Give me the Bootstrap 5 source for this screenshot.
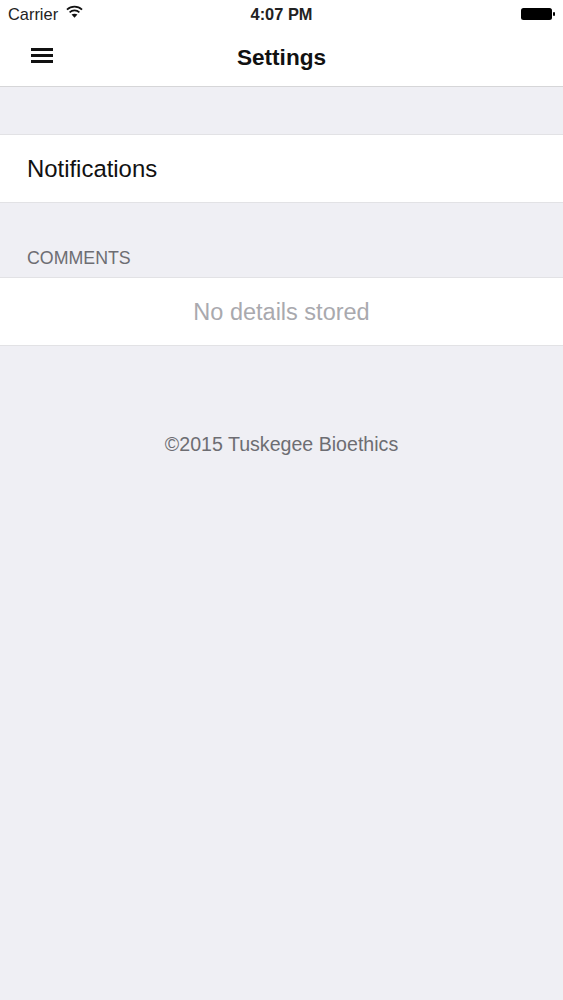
<!DOCTYPE html>
<html lang="en">
<head>
<meta charset="utf-8">
<title>Settings</title>
<link href="https://cdn.jsdelivr.net/npm/bootstrap@5.3.0/dist/css/bootstrap.min.css" rel="stylesheet">
<style>
html, body { height: 100%; }
body { background: #efeff4; font-family: "Liberation Sans", Arial, sans-serif; color: #111; }
.phone-head { background: #fff; height: 87px; border-bottom: 1px solid #d6d6d8; }
.status-row { height: 29px; padding: 0 8px; font-size: 16.4px; color: #222; }
.status-side { flex: 1 1 0; }
.status-time { font-weight: 700; font-size: 16.4px; }
.wifi-ico { width: 17px; height: 13px; margin-left: 8px; margin-top: -5px; }
.batt-ico { width: 34px; height: 14px; margin-top: -1px; }
.title-row { height: 57px; }
.menu-btn { width: 22px; height: 15px; left: 31px; top: 19px; }
.menu-btn i { display: block; height: 3px; background: #111; }
.page-title { font-size: 22.6px; font-weight: 700; margin: 0; line-height: 57px; }
.gap-one { height: 47px; }
.gap-two { height: 40px; }
.set-row { background: #fff; border-top: 1px solid #e2e2e5; border-bottom: 1px solid #e2e2e5; }
.row-notify { height: 69px; padding-left: 27px; padding-top: 1px; font-size: 23.9px; color: #111; }
.sec-label { height: 34px; padding-left: 27px; font-size: 17.8px; color: #6d6d72; line-height: 30px; }
.row-empty { height: 69px; padding-top: 2px; font-size: 23.5px; color: #a9a9ae; }
.foot-note { margin-top: 84px; font-size: 19.6px; color: #6d6d72; line-height: 28px; }
</style>
</head>
<body>
<header class="phone-head">
  <div class="status-row d-flex align-items-center">
    <div class="status-side d-flex align-items-center">
      <span>Carrier</span>
      <svg class="wifi-ico" viewBox="0 0 18 13" aria-hidden="true">
        <path d="M1 4.6C5.6.3 12.4.3 17 4.6" fill="none" stroke="#111" stroke-width="1.8"/>
        <path d="M3.8 7.4c3-2.7 7.4-2.7 10.4 0" fill="none" stroke="#111" stroke-width="1.8"/>
        <path d="M9 13l-3.1-3.2c1.8-1.4 4.4-1.4 6.2 0z" fill="#111"/>
      </svg>
    </div>
    <span class="status-time">4:07 PM</span>
    <div class="status-side d-flex justify-content-end">
      <svg class="batt-ico" viewBox="0 0 34 14" aria-hidden="true">
        <rect x="0" y="1" width="31" height="12" rx="2.5" fill="#000"/>
        <rect x="32" y="5" width="2" height="4" rx="1" fill="#000"/>
      </svg>
    </div>
  </div>
  <nav class="title-row position-relative text-center">
    <div class="menu-btn position-absolute d-flex flex-column justify-content-between" aria-label="Menu"><i></i><i></i><i></i></div>
    <h1 class="page-title">Settings</h1>
  </nav>
</header>
<main>
  <div class="gap-one"></div>
  <div class="set-row row-notify d-flex align-items-center">Notifications</div>
  <div class="gap-two"></div>
  <div class="sec-label">COMMENTS</div>
  <div class="set-row row-empty d-flex align-items-center justify-content-center">No details stored</div>
  <p class="foot-note text-center mb-0">©2015 Tuskegee Bioethics</p>
</main>
<script src="https://cdn.jsdelivr.net/npm/bootstrap@5.3.0/dist/js/bootstrap.bundle.min.js"></script>
</body>
</html>
